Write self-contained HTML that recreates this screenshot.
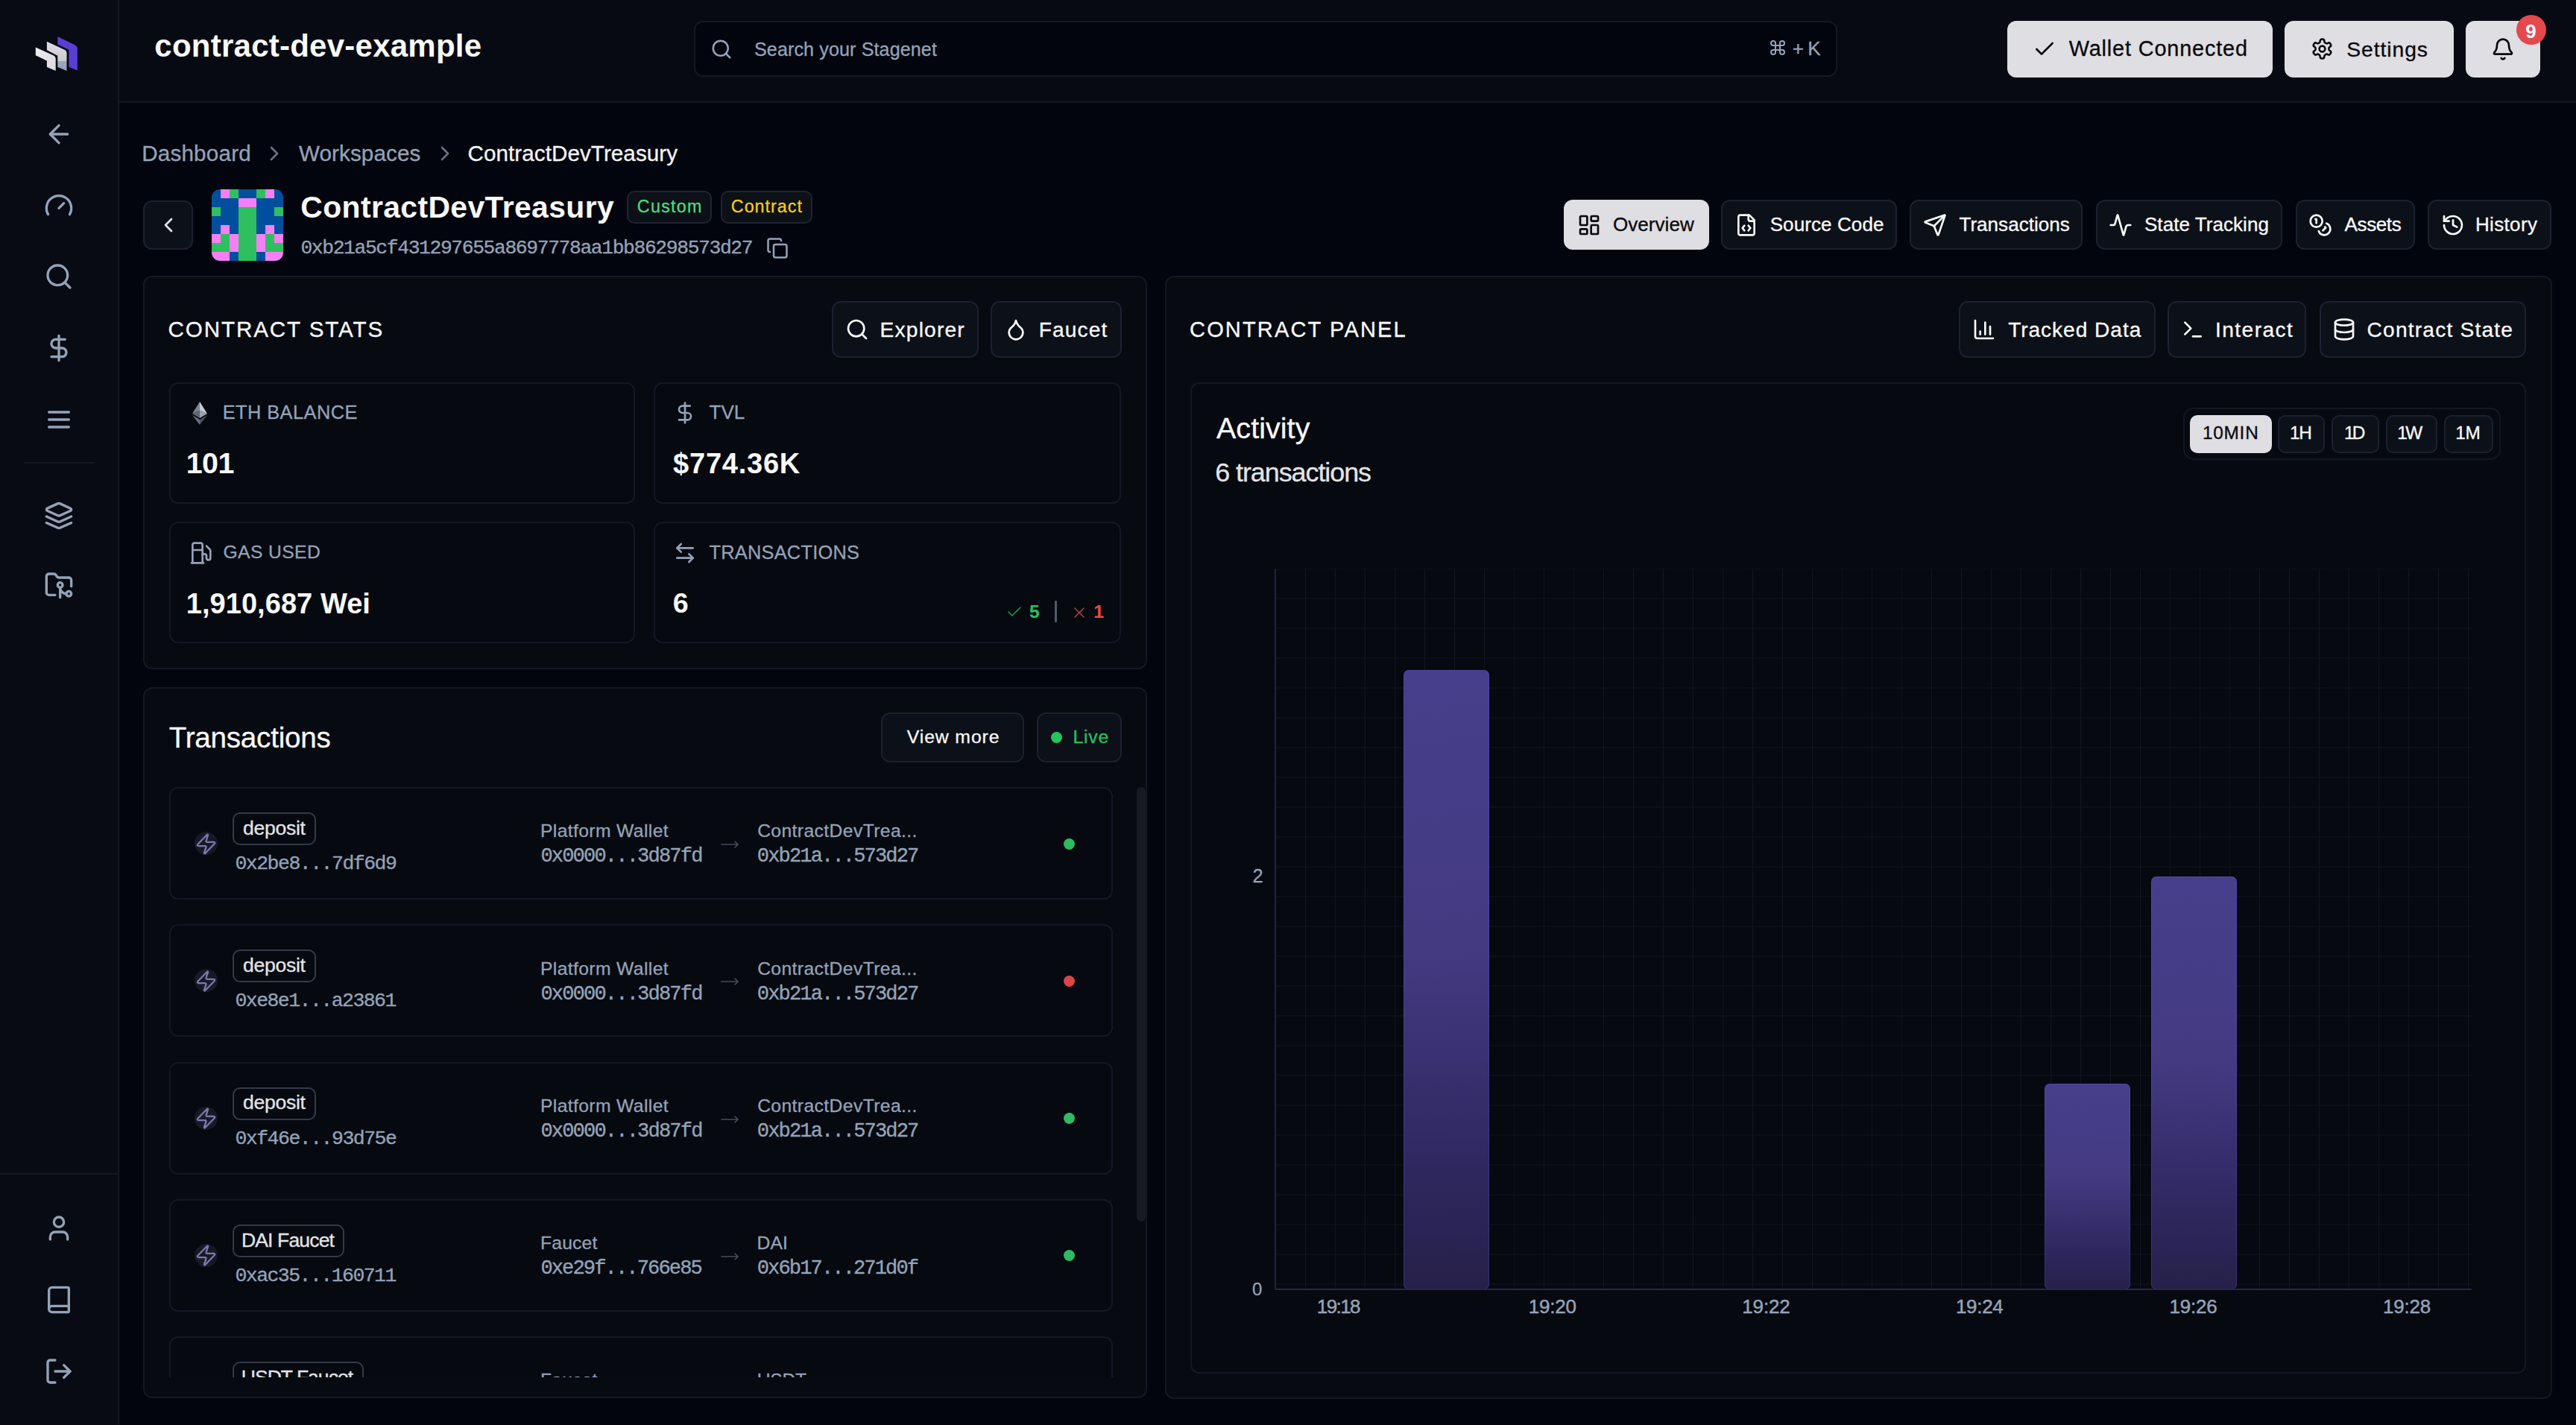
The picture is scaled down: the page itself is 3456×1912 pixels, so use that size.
<!DOCTYPE html>
<html><head><meta charset="utf-8"><style>
html,body{margin:0;padding:0;width:3456px;height:1912px;overflow:hidden;background:#03050e;font-family:"Liberation Sans",sans-serif}
@media (max-width:1800px){html{zoom:0.5}}
</style></head><body>
<div style="position:absolute;left:0px;top:0px;width:158px;height:1912px;background:#080b13;border-radius:0px;"></div>
<div style="position:absolute;left:158px;top:0px;width:2px;height:1912px;background:#131824;border-radius:0px;"></div>
<div style="position:absolute;left:32px;top:620px;width:94px;height:2px;background:#131824;border-radius:0px;"></div>
<div style="position:absolute;left:0px;top:1574px;width:158px;height:2px;background:#131824;border-radius:0px;"></div>
<svg style="position:absolute;left:0;top:0" width="160" height="136" viewBox="0 0 160 136">
<defs><linearGradient id="lg2" x1="0" y1="0" x2="0" y2="1"><stop offset="0" stop-color="#dedde3"/><stop offset="0.66" stop-color="#cbcbd2"/><stop offset="0.67" stop-color="#9ba8bc"/><stop offset="1" stop-color="#93a0b5"/></linearGradient>
<linearGradient id="lg1" x1="0" y1="0" x2="1" y2="1"><stop offset="0" stop-color="#eeeef1"/><stop offset="1" stop-color="#d9d9df"/></linearGradient></defs>
<path d="M77.3,49.1 L100.8,60.4 Q103.8,61.9 103.8,65.5 L103.8,94.5 L92.4,89.9 L92.4,66.7 L77.3,59.6 Z" fill="#5a3dd4"/>
<path d="M62.9,55.8 L86.5,66.7 Q89.5,68.2 89.5,71.4 L89.5,95 L77.3,89.9 L77.3,74.7 L62.9,67.2 Z" fill="url(#lg2)"/>
<path d="M47.8,63.4 L71.4,74.3 Q74.7,75.8 74.7,79 L74.7,95 L62.9,89.9 L62.9,81.5 L47.8,74.3 Z" fill="url(#lg1)"/>
</svg>
<svg style="position:absolute;left:58.50px;top:160.00px" width="40" height="40" viewBox="0 0 24 24" fill="none" stroke="#94a3b8" stroke-width="2" stroke-linecap="round" stroke-linejoin="round"><path d="m12 19-7-7 7-7"/><path d="M19 12H5"/></svg>
<svg style="position:absolute;left:58.50px;top:255.50px" width="40" height="40" viewBox="0 0 24 24" fill="none" stroke="#94a3b8" stroke-width="2" stroke-linecap="round" stroke-linejoin="round"><path d="m12 14 4-4"/><path d="M3.34 19a10 10 0 1 1 17.32 0"/></svg>
<svg style="position:absolute;left:58.50px;top:350.60px" width="40" height="40" viewBox="0 0 24 24" fill="none" stroke="#94a3b8" stroke-width="2" stroke-linecap="round" stroke-linejoin="round"><circle cx="11" cy="11" r="8"/><path d="m21 21-4.3-4.3"/></svg>
<svg style="position:absolute;left:58.50px;top:447.00px" width="40" height="40" viewBox="0 0 24 24" fill="none" stroke="#94a3b8" stroke-width="2" stroke-linecap="round" stroke-linejoin="round"><line x1="12" x2="12" y1="2" y2="22"/><path d="M17 5H9.5a3.5 3.5 0 0 0 0 7h5a3.5 3.5 0 0 1 0 7H6"/></svg>
<svg style="position:absolute;left:58.50px;top:543.00px" width="40" height="40" viewBox="0 0 24 24" fill="none" stroke="#94a3b8" stroke-width="2" stroke-linecap="round" stroke-linejoin="round"><line x1="4" x2="20" y1="12" y2="12"/><line x1="4" x2="20" y1="6" y2="6"/><line x1="4" x2="20" y1="18" y2="18"/></svg>
<svg style="position:absolute;left:58.50px;top:672.00px" width="40" height="40" viewBox="0 0 24 24" fill="none" stroke="#94a3b8" stroke-width="2" stroke-linecap="round" stroke-linejoin="round"><path d="M12.83 2.18a2 2 0 0 0-1.66 0L2.6 6.08a1 1 0 0 0 0 1.83l8.58 3.91a2 2 0 0 0 1.66 0l8.58-3.9a1 1 0 0 0 0-1.83Z"/><path d="m22 17.65-9.17 4.16a2 2 0 0 1-1.66 0L2 17.65"/><path d="m22 12.65-9.17 4.16a2 2 0 0 1-1.66 0L2 12.65"/></svg>
<svg style="position:absolute;left:58.50px;top:764.60px" width="40" height="40" viewBox="0 0 24 24" fill="none" stroke="#94a3b8" stroke-width="2" stroke-linecap="round" stroke-linejoin="round"><path d="M9 20H4a2 2 0 0 1-2-2V5a2 2 0 0 1 2-2h3.9a2 2 0 0 1 1.69.9l.81 1.2a2 2 0 0 0 1.67.9H20a2 2 0 0 1 2 2v5"/><circle cx="13" cy="12" r="2"/><path d="M18 19c-2.8 0-5-2.2-5-5v8"/><circle cx="20" cy="19" r="2"/></svg>
<svg style="position:absolute;left:58.50px;top:1627.60px" width="40" height="40" viewBox="0 0 24 24" fill="none" stroke="#94a3b8" stroke-width="2" stroke-linecap="round" stroke-linejoin="round"><path d="M19 21v-2a4 4 0 0 0-4-4H9a4 4 0 0 0-4 4v2"/><circle cx="12" cy="7" r="4"/></svg>
<svg style="position:absolute;left:58.50px;top:1724.00px" width="40" height="40" viewBox="0 0 24 24" fill="none" stroke="#94a3b8" stroke-width="2" stroke-linecap="round" stroke-linejoin="round"><path d="M4 19.5v-15A2.5 2.5 0 0 1 6.5 2H19a1 1 0 0 1 1 1v18a1 1 0 0 1-1 1H6.5a1 1 0 0 1 0-5H20"/></svg>
<svg style="position:absolute;left:58.50px;top:1820.00px" width="40" height="40" viewBox="0 0 24 24" fill="none" stroke="#94a3b8" stroke-width="2" stroke-linecap="round" stroke-linejoin="round"><path d="M9 21H5a2 2 0 0 1-2-2V5a2 2 0 0 1 2-2h4"/><polyline points="16 17 21 12 16 7"/><line x1="21" x2="9" y1="12" y2="12"/></svg>
<div style="position:absolute;left:160px;top:0px;width:3296px;height:136px;background:#070a12;border-radius:0px;"></div>
<div style="position:absolute;left:160px;top:136px;width:3296px;height:2px;background:#131824;border-radius:0px;"></div>
<div style="position:absolute;left:207.34px;top:40.73px;font-family:'Liberation Sans',sans-serif;font-weight:700;font-size:41.97px;line-height:41.97px;letter-spacing:0.258px;color:#fafafa;white-space:nowrap;">contract-dev-example</div>
<div style="position:absolute;left:931px;top:28px;width:1534px;height:75px;background:#03050e;border:2px solid #131824;box-sizing:border-box;border-radius:12px;"></div>
<svg style="position:absolute;left:953.00px;top:51.00px" width="30" height="30" viewBox="0 0 24 24" fill="none" stroke="#94a3b8" stroke-width="2" stroke-linecap="round" stroke-linejoin="round"><circle cx="11" cy="11" r="8"/><path d="m21 21-4.3-4.3"/></svg>
<div style="position:absolute;left:1012.00px;top:54.12px;font-family:'Liberation Sans',sans-serif;font-weight:400;font-size:25.07px;line-height:25.07px;letter-spacing:0.129px;color:#94a3b8;white-space:nowrap;-webkit-text-stroke:0.3px currentColor;">Search your Stagenet</div>
<svg style="position:absolute;left:2373px;top:52px" width="24" height="24" viewBox="0 0 24 24" fill="none" stroke="#94a3b8" stroke-width="2" stroke-linecap="round" stroke-linejoin="round"><path d="M15 6v12a3 3 0 1 0 3-3H6a3 3 0 1 0 3 3V6a3 3 0 1 0-3 3h12a3 3 0 1 0-3-3"/></svg>
<div style="position:absolute;left:2404.76px;top:52.18px;font-family:'Liberation Sans',sans-serif;font-weight:400;font-size:26.06px;line-height:26.06px;letter-spacing:-0.955px;color:#94a3b8;white-space:nowrap;-webkit-text-stroke:0.3px currentColor;">+ K</div>
<div style="position:absolute;left:2693px;top:28px;width:356px;height:76px;background:#dfdee3;border-radius:12px;"></div>
<svg style="position:absolute;left:2727.00px;top:49.50px" width="32" height="32" viewBox="0 0 24 24" fill="none" stroke="#09090b" stroke-width="2" stroke-linecap="round" stroke-linejoin="round"><path d="M20 6 9 17l-5-5"/></svg>
<div style="position:absolute;left:2775.70px;top:51.30px;font-family:'Liberation Sans',sans-serif;font-weight:400;font-size:28.87px;line-height:28.87px;letter-spacing:0.840px;color:#09090b;white-space:nowrap;-webkit-text-stroke:0.3px currentColor;">Wallet Connected</div>
<div style="position:absolute;left:3065px;top:28px;width:227px;height:76px;background:#dfdee3;border-radius:12px;"></div>
<svg style="position:absolute;left:3099.50px;top:50.20px" width="31" height="31" viewBox="0 0 24 24" fill="none" stroke="#09090b" stroke-width="2" stroke-linecap="round" stroke-linejoin="round"><path d="M12.22 2h-.44a2 2 0 0 0-2 2v.18a2 2 0 0 1-1 1.73l-.43.25a2 2 0 0 1-2 0l-.15-.08a2 2 0 0 0-2.73.73l-.22.38a2 2 0 0 0 .73 2.73l.15.1a2 2 0 0 1 1 1.72v.51a2 2 0 0 1-1 1.74l-.15.09a2 2 0 0 0-.73 2.73l.22.38a2 2 0 0 0 2.73.73l.15-.08a2 2 0 0 1 2 0l.43.25a2 2 0 0 1 1 1.73V20a2 2 0 0 0 2 2h.44a2 2 0 0 0 2-2v-.18a2 2 0 0 1 1-1.73l.43-.25a2 2 0 0 1 2 0l.15.08a2 2 0 0 0 2.73-.73l.22-.39a2 2 0 0 0-.73-2.73l-.15-.08a2 2 0 0 1-1-1.74v-.5a2 2 0 0 1 1-1.74l.15-.09a2 2 0 0 0 .73-2.73l-.22-.38a2 2 0 0 0-2.73-.73l-.15.08a2 2 0 0 1-2 0l-.43-.25a2 2 0 0 1-1-1.73V4a2 2 0 0 0-2-2z"/><circle cx="12" cy="12" r="3"/></svg>
<div style="position:absolute;left:3148.17px;top:51.58px;font-family:'Liberation Sans',sans-serif;font-weight:400;font-size:28.31px;line-height:28.31px;letter-spacing:0.941px;color:#09090b;white-space:nowrap;-webkit-text-stroke:0.3px currentColor;">Settings</div>
<div style="position:absolute;left:3308px;top:28px;width:100px;height:76px;background:#dfdee3;border-radius:12px;"></div>
<svg style="position:absolute;left:3342.00px;top:50.20px" width="32" height="32" viewBox="0 0 24 24" fill="none" stroke="#09090b" stroke-width="2" stroke-linecap="round" stroke-linejoin="round"><path d="M10.268 21a2 2 0 0 0 3.464 0"/><path d="M3.262 15.326A1 1 0 0 0 4 17h16a1 1 0 0 0 .74-1.673C19.41 13.956 18 12.499 18 8A6 6 0 0 0 6 8c0 4.499-1.411 5.956-2.738 7.326"/></svg>
<div style="position:absolute;left:3376px;top:19.5px;width:40px;height:40px;background:#e5484d;border-radius:20px;"></div>
<div style="position:absolute;left:3388.22px;top:29.50px;font-family:'Liberation Sans',sans-serif;font-weight:700;font-size:25.92px;line-height:25.92px;letter-spacing:0.000px;color:#ffffff;white-space:nowrap;">9</div>
<div style="position:absolute;left:190.13px;top:191.01px;font-family:'Liberation Sans',sans-serif;font-weight:400;font-size:29.58px;line-height:29.58px;letter-spacing:0.229px;color:#94a3b8;white-space:nowrap;-webkit-text-stroke:0.3px currentColor;">Dashboard</div>
<svg style="position:absolute;left:351.60px;top:190.00px" width="32" height="32" viewBox="0 0 24 24" fill="none" stroke="#6b7280" stroke-width="2" stroke-linecap="round" stroke-linejoin="round"><path d="m9 18 6-6-6-6"/></svg>
<div style="position:absolute;left:401.00px;top:191.01px;font-family:'Liberation Sans',sans-serif;font-weight:400;font-size:29.58px;line-height:29.58px;letter-spacing:0.122px;color:#94a3b8;white-space:nowrap;-webkit-text-stroke:0.3px currentColor;">Workspaces</div>
<svg style="position:absolute;left:580.60px;top:190.00px" width="32" height="32" viewBox="0 0 24 24" fill="none" stroke="#6b7280" stroke-width="2" stroke-linecap="round" stroke-linejoin="round"><path d="m9 18 6-6-6-6"/></svg>
<div style="position:absolute;left:627.52px;top:191.01px;font-family:'Liberation Sans',sans-serif;font-weight:400;font-size:29.58px;line-height:29.58px;letter-spacing:0.084px;color:#f4f4f5;white-space:nowrap;-webkit-text-stroke:0.3px currentColor;">ContractDevTreasury</div>
<div style="position:absolute;left:192px;top:269px;width:67px;height:66px;background:#0c1018;border:2px solid #1c2130;box-sizing:border-box;border-radius:12px;"></div>
<svg style="position:absolute;left:210.00px;top:286.00px" width="32" height="32" viewBox="0 0 24 24" fill="none" stroke="#e4e4e7" stroke-width="2" stroke-linecap="round" stroke-linejoin="round"><path d="m15 18-6-6 6-6"/></svg>
<svg style="position:absolute;left:284px;top:254px;border-radius:11px" width="96" height="96" viewBox="0 0 96 96"><rect x="0" y="0" width="12" height="12" fill="#004f9e"/><rect x="12" y="0" width="12" height="12" fill="#f77ff5"/><rect x="24" y="0" width="12" height="12" fill="#30bf60"/><rect x="36" y="0" width="12" height="12" fill="#004f9e"/><rect x="48" y="0" width="12" height="12" fill="#004f9e"/><rect x="60" y="0" width="12" height="12" fill="#30bf60"/><rect x="72" y="0" width="12" height="12" fill="#f77ff5"/><rect x="84" y="0" width="12" height="12" fill="#004f9e"/><rect x="0" y="12" width="12" height="12" fill="#004f9e"/><rect x="12" y="12" width="12" height="12" fill="#004f9e"/><rect x="24" y="12" width="12" height="12" fill="#004f9e"/><rect x="36" y="12" width="12" height="12" fill="#f77ff5"/><rect x="48" y="12" width="12" height="12" fill="#f77ff5"/><rect x="60" y="12" width="12" height="12" fill="#004f9e"/><rect x="72" y="12" width="12" height="12" fill="#004f9e"/><rect x="84" y="12" width="12" height="12" fill="#004f9e"/><rect x="0" y="24" width="12" height="12" fill="#30bf60"/><rect x="12" y="24" width="12" height="12" fill="#004f9e"/><rect x="24" y="24" width="12" height="12" fill="#004f9e"/><rect x="36" y="24" width="12" height="12" fill="#30bf60"/><rect x="48" y="24" width="12" height="12" fill="#30bf60"/><rect x="60" y="24" width="12" height="12" fill="#004f9e"/><rect x="72" y="24" width="12" height="12" fill="#004f9e"/><rect x="84" y="24" width="12" height="12" fill="#30bf60"/><rect x="0" y="36" width="12" height="12" fill="#004f9e"/><rect x="12" y="36" width="12" height="12" fill="#004f9e"/><rect x="24" y="36" width="12" height="12" fill="#004f9e"/><rect x="36" y="36" width="12" height="12" fill="#30bf60"/><rect x="48" y="36" width="12" height="12" fill="#30bf60"/><rect x="60" y="36" width="12" height="12" fill="#004f9e"/><rect x="72" y="36" width="12" height="12" fill="#004f9e"/><rect x="84" y="36" width="12" height="12" fill="#004f9e"/><rect x="0" y="48" width="12" height="12" fill="#004f9e"/><rect x="12" y="48" width="12" height="12" fill="#f77ff5"/><rect x="24" y="48" width="12" height="12" fill="#004f9e"/><rect x="36" y="48" width="12" height="12" fill="#30bf60"/><rect x="48" y="48" width="12" height="12" fill="#30bf60"/><rect x="60" y="48" width="12" height="12" fill="#004f9e"/><rect x="72" y="48" width="12" height="12" fill="#f77ff5"/><rect x="84" y="48" width="12" height="12" fill="#004f9e"/><rect x="0" y="60" width="12" height="12" fill="#f77ff5"/><rect x="12" y="60" width="12" height="12" fill="#30bf60"/><rect x="24" y="60" width="12" height="12" fill="#f77ff5"/><rect x="36" y="60" width="12" height="12" fill="#30bf60"/><rect x="48" y="60" width="12" height="12" fill="#30bf60"/><rect x="60" y="60" width="12" height="12" fill="#f77ff5"/><rect x="72" y="60" width="12" height="12" fill="#30bf60"/><rect x="84" y="60" width="12" height="12" fill="#f77ff5"/><rect x="0" y="72" width="12" height="12" fill="#30bf60"/><rect x="12" y="72" width="12" height="12" fill="#30bf60"/><rect x="24" y="72" width="12" height="12" fill="#f77ff5"/><rect x="36" y="72" width="12" height="12" fill="#30bf60"/><rect x="48" y="72" width="12" height="12" fill="#30bf60"/><rect x="60" y="72" width="12" height="12" fill="#f77ff5"/><rect x="72" y="72" width="12" height="12" fill="#30bf60"/><rect x="84" y="72" width="12" height="12" fill="#30bf60"/><rect x="0" y="84" width="12" height="12" fill="#f77ff5"/><rect x="12" y="84" width="12" height="12" fill="#f77ff5"/><rect x="24" y="84" width="12" height="12" fill="#004f9e"/><rect x="36" y="84" width="12" height="12" fill="#30bf60"/><rect x="48" y="84" width="12" height="12" fill="#30bf60"/><rect x="60" y="84" width="12" height="12" fill="#004f9e"/><rect x="72" y="84" width="12" height="12" fill="#f77ff5"/><rect x="84" y="84" width="12" height="12" fill="#f77ff5"/></svg>
<div style="position:absolute;left:403.37px;top:257.89px;font-family:'Liberation Sans',sans-serif;font-weight:700;font-size:40.85px;line-height:40.85px;letter-spacing:0.407px;color:#fafafa;white-space:nowrap;">ContractDevTreasury</div>
<div style="position:absolute;left:841px;top:256px;width:114px;height:44px;background:#0c1017;border:2px solid #1f2433;box-sizing:border-box;border-radius:10px;"></div>
<div style="position:absolute;left:854.84px;top:265.86px;font-family:'Liberation Sans',sans-serif;font-weight:400;font-size:23.24px;line-height:23.24px;letter-spacing:1.312px;color:#4ade80;white-space:nowrap;-webkit-text-stroke:0.3px currentColor;">Custom</div>
<div style="position:absolute;left:967px;top:256px;width:123px;height:44px;background:#0c1017;border:2px solid #1f2433;box-sizing:border-box;border-radius:10px;"></div>
<div style="position:absolute;left:980.84px;top:265.86px;font-family:'Liberation Sans',sans-serif;font-weight:400;font-size:23.24px;line-height:23.24px;letter-spacing:1.040px;color:#facc15;white-space:nowrap;-webkit-text-stroke:0.3px currentColor;">Contract</div>
<div style="position:absolute;left:403.42px;top:320.46px;font-family:'Liberation Mono',sans-serif;font-weight:400;font-size:26.32px;line-height:26.32px;letter-spacing:-1.367px;color:#94a3b8;white-space:nowrap;-webkit-text-stroke:0.35px currentColor;">0xb21a5cf431297655a8697778aa1bb86298573d27</div>
<svg style="position:absolute;left:1028.00px;top:318.00px" width="30" height="30" viewBox="0 0 24 24" fill="none" stroke="#94a3b8" stroke-width="2" stroke-linecap="round" stroke-linejoin="round"><rect width="14" height="14" x="8" y="8" rx="2" ry="2"/><path d="M4 16c-1.1 0-2-.9-2-2V4c0-1.1.9-2 2-2h10c1.1 0 2 .9 2 2"/></svg>
<div style="position:absolute;left:2098px;top:268px;width:195px;height:67px;background:#dfdee3;border-radius:12px;"></div>
<svg style="position:absolute;left:2115.50px;top:285.50px" width="32" height="32" viewBox="0 0 24 24" fill="none" stroke="#09090b" stroke-width="2" stroke-linecap="round" stroke-linejoin="round"><rect width="7" height="9" x="3" y="3" rx="1"/><rect width="7" height="5" x="14" y="3" rx="1"/><rect width="7" height="9" x="14" y="12" rx="1"/><rect width="7" height="5" x="3" y="16" rx="1"/></svg>
<div style="position:absolute;left:2163.96px;top:287.98px;font-family:'Liberation Sans',sans-serif;font-weight:400;font-size:26.06px;line-height:26.06px;letter-spacing:0.036px;color:#09090b;white-space:nowrap;-webkit-text-stroke:0.3px currentColor;">Overview</div>
<div style="position:absolute;left:2309px;top:268px;width:236px;height:67px;background:#0c1018;border:2px solid #1c2130;box-sizing:border-box;border-radius:12px;"></div>
<svg style="position:absolute;left:2326.50px;top:285.50px" width="32" height="32" viewBox="0 0 24 24" fill="none" stroke="#fafafa" stroke-width="2" stroke-linecap="round" stroke-linejoin="round"><path d="M10 12.5 8 15l2 2.5"/><path d="m14 12.5 2 2.5-2 2.5"/><path d="M14 2v4a2 2 0 0 0 2 2h4"/><path d="M15 2H6a2 2 0 0 0-2 2v16a2 2 0 0 0 2 2h12a2 2 0 0 0 2-2V7z"/></svg>
<div style="position:absolute;left:2374.66px;top:287.98px;font-family:'Liberation Sans',sans-serif;font-weight:400;font-size:26.06px;line-height:26.06px;letter-spacing:0.080px;color:#fafafa;white-space:nowrap;-webkit-text-stroke:0.3px currentColor;">Source Code</div>
<div style="position:absolute;left:2562px;top:268px;width:232px;height:67px;background:#0c1018;border:2px solid #1c2130;box-sizing:border-box;border-radius:12px;"></div>
<svg style="position:absolute;left:2579.50px;top:285.50px" width="32" height="32" viewBox="0 0 24 24" fill="none" stroke="#fafafa" stroke-width="2" stroke-linecap="round" stroke-linejoin="round"><path d="M14.536 21.686a.5.5 0 0 0 .937-.024l6.5-19a.496.496 0 0 0-.635-.635l-19 6.5a.5.5 0 0 0-.024.937l7.93 3.18a2 2 0 0 1 1.112 1.11z"/><path d="m21.854 2.147-10.94 10.939"/></svg>
<div style="position:absolute;left:2628.48px;top:287.98px;font-family:'Liberation Sans',sans-serif;font-weight:400;font-size:26.06px;line-height:26.06px;letter-spacing:0.010px;color:#fafafa;white-space:nowrap;-webkit-text-stroke:0.3px currentColor;">Transactions</div>
<div style="position:absolute;left:2811.5px;top:268px;width:250.5px;height:67px;background:#0c1018;border:2px solid #1c2130;box-sizing:border-box;border-radius:12px;"></div>
<svg style="position:absolute;left:2829.00px;top:285.50px" width="32" height="32" viewBox="0 0 24 24" fill="none" stroke="#fafafa" stroke-width="2" stroke-linecap="round" stroke-linejoin="round"><path d="M22 12h-2.48a2 2 0 0 0-1.93 1.46l-2.35 8.36a.25.25 0 0 1-.48 0L9.24 2.18a.25.25 0 0 0-.48 0l-2.35 8.36A2 2 0 0 1 4.49 12H2"/></svg>
<div style="position:absolute;left:2876.96px;top:287.98px;font-family:'Liberation Sans',sans-serif;font-weight:400;font-size:26.06px;line-height:26.06px;letter-spacing:0.037px;color:#fafafa;white-space:nowrap;-webkit-text-stroke:0.3px currentColor;">State Tracking</div>
<div style="position:absolute;left:3079.6px;top:268px;width:160.4000000000001px;height:67px;background:#0c1018;border:2px solid #1c2130;box-sizing:border-box;border-radius:12px;"></div>
<svg style="position:absolute;left:3097.10px;top:285.50px" width="32" height="32" viewBox="0 0 24 24" fill="none" stroke="#fafafa" stroke-width="2" stroke-linecap="round" stroke-linejoin="round"><circle cx="8" cy="8" r="6"/><path d="M18.09 10.37A6 6 0 1 1 10.34 18"/><path d="M7 6h1v4"/><path d="m16.71 13.88.7.71-2.82 2.82"/></svg>
<div style="position:absolute;left:3145.50px;top:287.98px;font-family:'Liberation Sans',sans-serif;font-weight:400;font-size:26.06px;line-height:26.06px;letter-spacing:-0.383px;color:#fafafa;white-space:nowrap;-webkit-text-stroke:0.3px currentColor;">Assets</div>
<div style="position:absolute;left:3257.4px;top:268px;width:166.0px;height:67px;background:#0c1018;border:2px solid #1c2130;box-sizing:border-box;border-radius:12px;"></div>
<svg style="position:absolute;left:3274.90px;top:285.50px" width="32" height="32" viewBox="0 0 24 24" fill="none" stroke="#fafafa" stroke-width="2" stroke-linecap="round" stroke-linejoin="round"><path d="M3 12a9 9 0 1 0 9-9 9.75 9.75 0 0 0-6.74 2.74L3 8"/><path d="M3 3v5h5"/><path d="M12 7v5l4 2"/></svg>
<div style="position:absolute;left:3320.92px;top:287.98px;font-family:'Liberation Sans',sans-serif;font-weight:400;font-size:26.06px;line-height:26.06px;letter-spacing:0.336px;color:#fafafa;white-space:nowrap;-webkit-text-stroke:0.3px currentColor;">History</div>
<div style="position:absolute;left:192px;top:370px;width:1347px;height:528px;background:#070a11;border:2px solid #131824;box-sizing:border-box;border-radius:12px;"></div>
<div style="position:absolute;left:225.52px;top:427.01px;font-family:'Liberation Sans',sans-serif;font-weight:400;font-size:29.58px;line-height:29.58px;letter-spacing:1.902px;color:#fafafa;white-space:nowrap;-webkit-text-stroke:0.3px currentColor;">CONTRACT STATS</div>
<div style="position:absolute;left:1116px;top:404px;width:197px;height:76px;background:#0c1018;border:2px solid #1c2130;box-sizing:border-box;border-radius:12px;"></div>
<svg style="position:absolute;left:1134.00px;top:426.00px" width="32" height="32" viewBox="0 0 24 24" fill="none" stroke="#fafafa" stroke-width="2" stroke-linecap="round" stroke-linejoin="round"><circle cx="11" cy="11" r="8"/><path d="m21 21-4.3-4.3"/></svg>
<div style="position:absolute;left:1180.55px;top:428.20px;font-family:'Liberation Sans',sans-serif;font-weight:400;font-size:28.17px;line-height:28.17px;letter-spacing:1.190px;color:#fafafa;white-space:nowrap;-webkit-text-stroke:0.3px currentColor;">Explorer</div>
<div style="position:absolute;left:1329px;top:404px;width:176px;height:76px;background:#0c1018;border:2px solid #1c2130;box-sizing:border-box;border-radius:12px;"></div>
<svg style="position:absolute;left:1346.80px;top:426.00px" width="32" height="32" viewBox="0 0 24 24" fill="none" stroke="#fafafa" stroke-width="2" stroke-linecap="round" stroke-linejoin="round"><path d="M12 22a7 7 0 0 0 7-7c0-2-1-3.9-3-5.5s-3.5-4-4-6.5c-.5 2.5-2 4.9-4 6.5C6 11.1 5 13 5 15a7 7 0 0 0 7 7z"/></svg>
<div style="position:absolute;left:1393.75px;top:428.20px;font-family:'Liberation Sans',sans-serif;font-weight:400;font-size:28.17px;line-height:28.17px;letter-spacing:1.115px;color:#fafafa;white-space:nowrap;-webkit-text-stroke:0.3px currentColor;">Faucet</div>
<div style="position:absolute;left:227px;top:513px;width:625px;height:163px;background:#060910;border:2px solid #131824;box-sizing:border-box;border-radius:12px;"></div>
<div style="position:absolute;left:877px;top:513px;width:627px;height:163px;background:#060910;border:2px solid #131824;box-sizing:border-box;border-radius:12px;"></div>
<div style="position:absolute;left:227px;top:700px;width:625px;height:163px;background:#060910;border:2px solid #131824;box-sizing:border-box;border-radius:12px;"></div>
<div style="position:absolute;left:877px;top:700px;width:627px;height:163px;background:#060910;border:2px solid #131824;box-sizing:border-box;border-radius:12px;"></div>
<svg style="position:absolute;left:258px;top:539px" width="20" height="31" viewBox="0 0 20 31">
<polygon points="10,0 0,16 10,12" fill="#7d8594"/><polygon points="10,0 20,16 10,12" fill="#c4c9d2"/>
<polygon points="0,16 10,22 10,12" fill="#5f6675"/><polygon points="20,16 10,22 10,12" fill="#9aa1ae"/>
<polygon points="0,18 10,31 10,24" fill="#6a7180"/><polygon points="20,18 10,31 10,24" fill="#4b5160"/></svg>
<div style="position:absolute;left:298.67px;top:540.58px;font-family:'Liberation Sans',sans-serif;font-weight:400;font-size:25.35px;line-height:25.35px;letter-spacing:0.466px;color:#94a3b8;white-space:nowrap;-webkit-text-stroke:0.3px currentColor;">ETH BALANCE</div>
<div style="position:absolute;left:249.63px;top:601.68px;font-family:'Liberation Sans',sans-serif;font-weight:700;font-size:39.44px;line-height:39.44px;letter-spacing:-0.500px;color:#fafafa;white-space:nowrap;">101</div>
<svg style="position:absolute;left:902.80px;top:538.00px" width="32" height="32" viewBox="0 0 24 24" fill="none" stroke="#94a3b8" stroke-width="2" stroke-linecap="round" stroke-linejoin="round"><line x1="12" x2="12" y1="2" y2="22"/><path d="M17 5H9.5a3.5 3.5 0 0 0 0 7h5a3.5 3.5 0 0 1 0 7H6"/></svg>
<div style="position:absolute;left:951.48px;top:540.50px;font-family:'Liberation Sans',sans-serif;font-weight:400;font-size:25.92px;line-height:25.92px;letter-spacing:0.134px;color:#94a3b8;white-space:nowrap;-webkit-text-stroke:0.3px currentColor;">TVL</div>
<div style="position:absolute;left:903.12px;top:602.87px;font-family:'Liberation Sans',sans-serif;font-weight:700;font-size:38.03px;line-height:38.03px;letter-spacing:0.763px;color:#fafafa;white-space:nowrap;">$774.36K</div>
<svg style="position:absolute;left:253.00px;top:725.70px" width="32" height="32" viewBox="0 0 24 24" fill="none" stroke="#94a3b8" stroke-width="2" stroke-linecap="round" stroke-linejoin="round"><line x1="3" x2="15" y1="22" y2="22"/><line x1="4" x2="14" y1="9" y2="9"/><path d="M14 22V4a2 2 0 0 0-2-2H6a2 2 0 0 0-2 2v18"/><path d="M14 13h2a2 2 0 0 1 2 2v2a2 2 0 0 0 2 2a2 2 0 0 0 2-2V9.83a2 2 0 0 0-.59-1.42L18 5"/></svg>
<div style="position:absolute;left:299.47px;top:729.17px;font-family:'Liberation Sans',sans-serif;font-weight:400;font-size:24.65px;line-height:24.65px;letter-spacing:0.413px;color:#94a3b8;white-space:nowrap;-webkit-text-stroke:0.3px currentColor;">GAS USED</div>
<div style="position:absolute;left:249.72px;top:790.87px;font-family:'Liberation Sans',sans-serif;font-weight:700;font-size:38.03px;line-height:38.03px;letter-spacing:0.050px;color:#fafafa;white-space:nowrap;">1,910,687 Wei</div>
<svg style="position:absolute;left:902.80px;top:725.80px" width="32" height="32" viewBox="0 0 24 24" fill="none" stroke="#94a3b8" stroke-width="2" stroke-linecap="round" stroke-linejoin="round"><path d="M8 3 4 7l4 4"/><path d="M4 7h16"/><path d="m16 21 4-4-4-4"/><path d="M20 17H4"/></svg>
<div style="position:absolute;left:951.49px;top:728.58px;font-family:'Liberation Sans',sans-serif;font-weight:400;font-size:25.35px;line-height:25.35px;letter-spacing:0.258px;color:#94a3b8;white-space:nowrap;-webkit-text-stroke:0.3px currentColor;">TRANSACTIONS</div>
<div style="position:absolute;left:902.87px;top:790.92px;font-family:'Liberation Sans',sans-serif;font-weight:700;font-size:37.61px;line-height:37.61px;letter-spacing:0.000px;color:#fafafa;white-space:nowrap;">6</div>
<svg style="position:absolute;left:1348.80px;top:809.30px" width="24" height="24" viewBox="0 0 24 24" fill="none" stroke="#16a34a" stroke-width="1.5" stroke-linecap="round" stroke-linejoin="round"><path d="M20 6 9 17l-5-5"/></svg>
<div style="position:absolute;left:1380.96px;top:808.67px;font-family:'Liberation Sans',sans-serif;font-weight:700;font-size:24.65px;line-height:24.65px;letter-spacing:0.000px;color:#22c55e;white-space:nowrap;">5</div>
<div style="position:absolute;left:1414.5px;top:806px;width:3.5px;height:29px;background:#525a68;border-radius:1px;"></div>
<svg style="position:absolute;left:1435.90px;top:810.00px" width="24" height="24" viewBox="0 0 24 24" fill="none" stroke="#b4433f" stroke-width="1.5" stroke-linecap="round" stroke-linejoin="round"><path d="M18 6 6 18"/><path d="m6 6 12 12"/></svg>
<div style="position:absolute;left:1467.22px;top:808.67px;font-family:'Liberation Sans',sans-serif;font-weight:700;font-size:24.65px;line-height:24.65px;letter-spacing:0.000px;color:#ef4444;white-space:nowrap;">1</div>
<div style="position:absolute;left:192px;top:922px;width:1347px;height:954px;background:#070a11;border:2px solid #131824;box-sizing:border-box;border-radius:12px;"></div>
<div style="position:absolute;left:226.73px;top:970.79px;font-family:'Liberation Sans',sans-serif;font-weight:400;font-size:38.59px;line-height:38.59px;letter-spacing:-0.215px;color:#fafafa;white-space:nowrap;-webkit-text-stroke:0.3px currentColor;">Transactions</div>
<div style="position:absolute;left:1182px;top:956px;width:192px;height:67px;background:#0c1018;border:2px solid #1c2130;box-sizing:border-box;border-radius:12px;"></div>
<div style="position:absolute;left:1216.80px;top:976.85px;font-family:'Liberation Sans',sans-serif;font-weight:400;font-size:24.79px;line-height:24.79px;letter-spacing:0.881px;color:#fafafa;white-space:nowrap;-webkit-text-stroke:0.3px currentColor;">View more</div>
<div style="position:absolute;left:1391px;top:956px;width:114px;height:67px;background:#0c1018;border:2px solid #1c2130;box-sizing:border-box;border-radius:12px;"></div>
<div style="position:absolute;left:1409.5px;top:982.2px;width:15px;height:15px;background:#22c55e;border-radius:8px;"></div>
<div style="position:absolute;left:1439.52px;top:976.85px;font-family:'Liberation Sans',sans-serif;font-weight:400;font-size:24.79px;line-height:24.79px;letter-spacing:0.768px;color:#22c55e;white-space:nowrap;-webkit-text-stroke:0.3px currentColor;">Live</div>
<div style="position:absolute;left:192px;top:1040px;width:1347px;height:807.7px;overflow:hidden">
<div style="position:absolute;left:35px;top:16.0px;width:1266px;height:151px;background:#060910;border:2px solid #131824;box-sizing:border-box;border-radius:12px;"></div>
<div style="position:absolute;left:68.5px;top:76.0px;width:31px;height:31px;background:#171a26;border-radius:16px;"></div>
<svg style="position:absolute;left:68.50px;top:76.50px" width="31" height="31" viewBox="0 0 24 24" fill="none" stroke="#7e78ad" stroke-width="1.8" stroke-linecap="round" stroke-linejoin="round"><path d="M4 14a1 1 0 0 1-.78-1.63l9.9-10.2a.5.5 0 0 1 .86.46l-1.92 6.02A1 1 0 0 0 13 10h7a1 1 0 0 1 .78 1.63l-9.9 10.2a.5.5 0 0 1-.86-.46l1.92-6.02A1 1 0 0 0 11 14z"/></svg>
<div style="position:absolute;left:120px;top:50.0px;width:111.89999999999998px;height:44px;background:transparent;border:2px solid #343a47;box-sizing:border-box;border-radius:10px;"></div>
<div style="position:absolute;left:133.94px;top:57.59px;font-family:'Liberation Sans',sans-serif;font-weight:400;font-size:26.52px;line-height:26.52px;letter-spacing:-0.253px;color:#e4e4e7;white-space:nowrap;-webkit-text-stroke:0.3px currentColor;">deposit</div>
<div style="position:absolute;left:123.41px;top:106.05px;font-family:'Liberation Mono',sans-serif;font-weight:400;font-size:26.47px;line-height:26.47px;letter-spacing:-1.485px;color:#94a3b8;white-space:nowrap;-webkit-text-stroke:0.35px currentColor;">0x2be8...7df6d9</div>
<div style="position:absolute;left:533.03px;top:63.17px;font-family:'Liberation Sans',sans-serif;font-weight:400;font-size:24.65px;line-height:24.65px;letter-spacing:0.388px;color:#94a3b8;white-space:nowrap;-webkit-text-stroke:0.3px currentColor;">Platform Wallet</div>
<div style="position:absolute;left:533.38px;top:95.30px;font-family:'Liberation Mono',sans-serif;font-weight:400;font-size:27.06px;line-height:27.06px;letter-spacing:-1.820px;color:#94a3b8;white-space:nowrap;-webkit-text-stroke:0.35px currentColor;">0x0000...3d87fd</div>
<svg style="position:absolute;left:774px;top:85.0px" width="28" height="16" viewBox="0 0 28 16" fill="none" stroke="#464b5a" stroke-width="1.6" stroke-linecap="round"><path d="M2 8h22M20 4l4 4-4 4"/></svg>
<div style="position:absolute;left:824.17px;top:63.17px;font-family:'Liberation Sans',sans-serif;font-weight:400;font-size:24.65px;line-height:24.65px;letter-spacing:0.412px;color:#94a3b8;white-space:nowrap;-webkit-text-stroke:0.3px currentColor;">ContractDevTrea...</div>
<div style="position:absolute;left:823.78px;top:95.30px;font-family:'Liberation Mono',sans-serif;font-weight:400;font-size:27.06px;line-height:27.06px;letter-spacing:-1.853px;color:#94a3b8;white-space:nowrap;-webkit-text-stroke:0.35px currentColor;">0xb21a...573d27</div>
<div style="position:absolute;left:1235px;top:84.5px;width:15px;height:15px;background:#2dbb63;border-radius:8px;"></div>
<div style="position:absolute;left:35px;top:200.32999999999993px;width:1266px;height:151px;background:#060910;border:2px solid #131824;box-sizing:border-box;border-radius:12px;"></div>
<div style="position:absolute;left:68.5px;top:260.3299999999999px;width:31px;height:31px;background:#171a26;border-radius:16px;"></div>
<svg style="position:absolute;left:68.50px;top:260.83px" width="31" height="31" viewBox="0 0 24 24" fill="none" stroke="#7e78ad" stroke-width="1.8" stroke-linecap="round" stroke-linejoin="round"><path d="M4 14a1 1 0 0 1-.78-1.63l9.9-10.2a.5.5 0 0 1 .86.46l-1.92 6.02A1 1 0 0 0 13 10h7a1 1 0 0 1 .78 1.63l-9.9 10.2a.5.5 0 0 1-.86-.46l1.92-6.02A1 1 0 0 0 11 14z"/></svg>
<div style="position:absolute;left:120px;top:234.32999999999993px;width:111.89999999999998px;height:44px;background:transparent;border:2px solid #343a47;box-sizing:border-box;border-radius:10px;"></div>
<div style="position:absolute;left:133.94px;top:241.92px;font-family:'Liberation Sans',sans-serif;font-weight:400;font-size:26.52px;line-height:26.52px;letter-spacing:-0.253px;color:#e4e4e7;white-space:nowrap;-webkit-text-stroke:0.3px currentColor;">deposit</div>
<div style="position:absolute;left:123.41px;top:290.38px;font-family:'Liberation Mono',sans-serif;font-weight:400;font-size:26.47px;line-height:26.47px;letter-spacing:-1.523px;color:#94a3b8;white-space:nowrap;-webkit-text-stroke:0.35px currentColor;">0xe8e1...a23861</div>
<div style="position:absolute;left:533.03px;top:247.50px;font-family:'Liberation Sans',sans-serif;font-weight:400;font-size:24.65px;line-height:24.65px;letter-spacing:0.388px;color:#94a3b8;white-space:nowrap;-webkit-text-stroke:0.3px currentColor;">Platform Wallet</div>
<div style="position:absolute;left:533.38px;top:279.63px;font-family:'Liberation Mono',sans-serif;font-weight:400;font-size:27.06px;line-height:27.06px;letter-spacing:-1.820px;color:#94a3b8;white-space:nowrap;-webkit-text-stroke:0.35px currentColor;">0x0000...3d87fd</div>
<svg style="position:absolute;left:774px;top:269.3299999999999px" width="28" height="16" viewBox="0 0 28 16" fill="none" stroke="#464b5a" stroke-width="1.6" stroke-linecap="round"><path d="M2 8h22M20 4l4 4-4 4"/></svg>
<div style="position:absolute;left:824.17px;top:247.50px;font-family:'Liberation Sans',sans-serif;font-weight:400;font-size:24.65px;line-height:24.65px;letter-spacing:0.412px;color:#94a3b8;white-space:nowrap;-webkit-text-stroke:0.3px currentColor;">ContractDevTrea...</div>
<div style="position:absolute;left:823.78px;top:279.63px;font-family:'Liberation Mono',sans-serif;font-weight:400;font-size:27.06px;line-height:27.06px;letter-spacing:-1.853px;color:#94a3b8;white-space:nowrap;-webkit-text-stroke:0.35px currentColor;">0xb21a...573d27</div>
<div style="position:absolute;left:1235px;top:268.8299999999999px;width:15px;height:15px;background:#dc4545;border-radius:8px;"></div>
<div style="position:absolute;left:35px;top:384.6600000000001px;width:1266px;height:151px;background:#060910;border:2px solid #131824;box-sizing:border-box;border-radius:12px;"></div>
<div style="position:absolute;left:68.5px;top:444.6600000000001px;width:31px;height:31px;background:#171a26;border-radius:16px;"></div>
<svg style="position:absolute;left:68.50px;top:445.16px" width="31" height="31" viewBox="0 0 24 24" fill="none" stroke="#7e78ad" stroke-width="1.8" stroke-linecap="round" stroke-linejoin="round"><path d="M4 14a1 1 0 0 1-.78-1.63l9.9-10.2a.5.5 0 0 1 .86.46l-1.92 6.02A1 1 0 0 0 13 10h7a1 1 0 0 1 .78 1.63l-9.9 10.2a.5.5 0 0 1-.86-.46l1.92-6.02A1 1 0 0 0 11 14z"/></svg>
<div style="position:absolute;left:120px;top:418.6600000000001px;width:111.89999999999998px;height:44px;background:transparent;border:2px solid #343a47;box-sizing:border-box;border-radius:10px;"></div>
<div style="position:absolute;left:133.94px;top:426.25px;font-family:'Liberation Sans',sans-serif;font-weight:400;font-size:26.52px;line-height:26.52px;letter-spacing:-0.253px;color:#e4e4e7;white-space:nowrap;-webkit-text-stroke:0.3px currentColor;">deposit</div>
<div style="position:absolute;left:123.41px;top:474.71px;font-family:'Liberation Mono',sans-serif;font-weight:400;font-size:26.47px;line-height:26.47px;letter-spacing:-1.485px;color:#94a3b8;white-space:nowrap;-webkit-text-stroke:0.35px currentColor;">0xf46e...93d75e</div>
<div style="position:absolute;left:533.03px;top:431.83px;font-family:'Liberation Sans',sans-serif;font-weight:400;font-size:24.65px;line-height:24.65px;letter-spacing:0.388px;color:#94a3b8;white-space:nowrap;-webkit-text-stroke:0.3px currentColor;">Platform Wallet</div>
<div style="position:absolute;left:533.38px;top:463.96px;font-family:'Liberation Mono',sans-serif;font-weight:400;font-size:27.06px;line-height:27.06px;letter-spacing:-1.820px;color:#94a3b8;white-space:nowrap;-webkit-text-stroke:0.35px currentColor;">0x0000...3d87fd</div>
<svg style="position:absolute;left:774px;top:453.6600000000001px" width="28" height="16" viewBox="0 0 28 16" fill="none" stroke="#464b5a" stroke-width="1.6" stroke-linecap="round"><path d="M2 8h22M20 4l4 4-4 4"/></svg>
<div style="position:absolute;left:824.17px;top:431.83px;font-family:'Liberation Sans',sans-serif;font-weight:400;font-size:24.65px;line-height:24.65px;letter-spacing:0.412px;color:#94a3b8;white-space:nowrap;-webkit-text-stroke:0.3px currentColor;">ContractDevTrea...</div>
<div style="position:absolute;left:823.78px;top:463.96px;font-family:'Liberation Mono',sans-serif;font-weight:400;font-size:27.06px;line-height:27.06px;letter-spacing:-1.853px;color:#94a3b8;white-space:nowrap;-webkit-text-stroke:0.35px currentColor;">0xb21a...573d27</div>
<div style="position:absolute;left:1235px;top:453.1600000000001px;width:15px;height:15px;background:#2dbb63;border-radius:8px;"></div>
<div style="position:absolute;left:35px;top:568.99px;width:1266px;height:151px;background:#060910;border:2px solid #131824;box-sizing:border-box;border-radius:12px;"></div>
<div style="position:absolute;left:68.5px;top:628.99px;width:31px;height:31px;background:#171a26;border-radius:16px;"></div>
<svg style="position:absolute;left:68.50px;top:629.49px" width="31" height="31" viewBox="0 0 24 24" fill="none" stroke="#7e78ad" stroke-width="1.8" stroke-linecap="round" stroke-linejoin="round"><path d="M4 14a1 1 0 0 1-.78-1.63l9.9-10.2a.5.5 0 0 1 .86.46l-1.92 6.02A1 1 0 0 0 13 10h7a1 1 0 0 1 .78 1.63l-9.9 10.2a.5.5 0 0 1-.86-.46l1.92-6.02A1 1 0 0 0 11 14z"/></svg>
<div style="position:absolute;left:120px;top:602.99px;width:150px;height:44px;background:transparent;border:2px solid #343a47;box-sizing:border-box;border-radius:10px;"></div>
<div style="position:absolute;left:131.88px;top:610.58px;font-family:'Liberation Sans',sans-serif;font-weight:400;font-size:26.52px;line-height:26.52px;letter-spacing:-0.844px;color:#e4e4e7;white-space:nowrap;-webkit-text-stroke:0.3px currentColor;">DAI Faucet</div>
<div style="position:absolute;left:123.41px;top:659.04px;font-family:'Liberation Mono',sans-serif;font-weight:400;font-size:26.47px;line-height:26.47px;letter-spacing:-1.523px;color:#94a3b8;white-space:nowrap;-webkit-text-stroke:0.35px currentColor;">0xac35...160711</div>
<div style="position:absolute;left:533.03px;top:616.16px;font-family:'Liberation Sans',sans-serif;font-weight:400;font-size:24.65px;line-height:24.65px;letter-spacing:0.193px;color:#94a3b8;white-space:nowrap;-webkit-text-stroke:0.3px currentColor;">Faucet</div>
<div style="position:absolute;left:533.38px;top:648.29px;font-family:'Liberation Mono',sans-serif;font-weight:400;font-size:27.06px;line-height:27.06px;letter-spacing:-1.859px;color:#94a3b8;white-space:nowrap;-webkit-text-stroke:0.35px currentColor;">0xe29f...766e85</div>
<svg style="position:absolute;left:774px;top:637.99px" width="28" height="16" viewBox="0 0 28 16" fill="none" stroke="#464b5a" stroke-width="1.6" stroke-linecap="round"><path d="M2 8h22M20 4l4 4-4 4"/></svg>
<div style="position:absolute;left:823.43px;top:616.16px;font-family:'Liberation Sans',sans-serif;font-weight:400;font-size:24.65px;line-height:24.65px;letter-spacing:0.224px;color:#94a3b8;white-space:nowrap;-webkit-text-stroke:0.3px currentColor;">DAI</div>
<div style="position:absolute;left:823.78px;top:648.29px;font-family:'Liberation Mono',sans-serif;font-weight:400;font-size:27.06px;line-height:27.06px;letter-spacing:-1.873px;color:#94a3b8;white-space:nowrap;-webkit-text-stroke:0.35px currentColor;">0x6b17...271d0f</div>
<div style="position:absolute;left:1235px;top:637.49px;width:15px;height:15px;background:#2dbb63;border-radius:8px;"></div>
<div style="position:absolute;left:35px;top:753.3200000000002px;width:1266px;height:151px;background:#060910;border:2px solid #131824;box-sizing:border-box;border-radius:12px;"></div>
<div style="position:absolute;left:68.5px;top:813.3200000000002px;width:31px;height:31px;background:#171a26;border-radius:16px;"></div>
<svg style="position:absolute;left:68.50px;top:813.82px" width="31" height="31" viewBox="0 0 24 24" fill="none" stroke="#7e78ad" stroke-width="1.8" stroke-linecap="round" stroke-linejoin="round"><path d="M4 14a1 1 0 0 1-.78-1.63l9.9-10.2a.5.5 0 0 1 .86.46l-1.92 6.02A1 1 0 0 0 13 10h7a1 1 0 0 1 .78 1.63l-9.9 10.2a.5.5 0 0 1-.86-.46l1.92-6.02A1 1 0 0 0 11 14z"/></svg>
<div style="position:absolute;left:120px;top:787.3200000000002px;width:176px;height:44px;background:transparent;border:2px solid #343a47;box-sizing:border-box;border-radius:10px;"></div>
<div style="position:absolute;left:131.84px;top:794.91px;font-family:'Liberation Sans',sans-serif;font-weight:400;font-size:26.52px;line-height:26.52px;letter-spacing:-0.995px;color:#e4e4e7;white-space:nowrap;-webkit-text-stroke:0.3px currentColor;">USDT Faucet</div>
<div style="position:absolute;left:123.41px;top:843.37px;font-family:'Liberation Mono',sans-serif;font-weight:400;font-size:26.47px;line-height:26.47px;letter-spacing:-1.542px;color:#94a3b8;white-space:nowrap;-webkit-text-stroke:0.35px currentColor;">0x91c4...5e02aa</div>
<div style="position:absolute;left:533.03px;top:800.49px;font-family:'Liberation Sans',sans-serif;font-weight:400;font-size:24.65px;line-height:24.65px;letter-spacing:0.193px;color:#94a3b8;white-space:nowrap;-webkit-text-stroke:0.3px currentColor;">Faucet</div>
<div style="position:absolute;left:533.38px;top:832.62px;font-family:'Liberation Mono',sans-serif;font-weight:400;font-size:27.06px;line-height:27.06px;letter-spacing:-1.859px;color:#94a3b8;white-space:nowrap;-webkit-text-stroke:0.35px currentColor;">0xe29f...766e85</div>
<svg style="position:absolute;left:774px;top:822.3200000000002px" width="28" height="16" viewBox="0 0 28 16" fill="none" stroke="#464b5a" stroke-width="1.6" stroke-linecap="round"><path d="M2 8h22M20 4l4 4-4 4"/></svg>
<div style="position:absolute;left:823.67px;top:800.49px;font-family:'Liberation Sans',sans-serif;font-weight:400;font-size:24.65px;line-height:24.65px;letter-spacing:-0.219px;color:#94a3b8;white-space:nowrap;-webkit-text-stroke:0.3px currentColor;">USDT</div>
<div style="position:absolute;left:823.78px;top:832.62px;font-family:'Liberation Mono',sans-serif;font-weight:400;font-size:27.06px;line-height:27.06px;letter-spacing:-1.853px;color:#94a3b8;white-space:nowrap;-webkit-text-stroke:0.35px currentColor;">0xdac1...831ec7</div>
<div style="position:absolute;left:1235px;top:821.8200000000002px;width:15px;height:15px;background:#22c55e;border-radius:8px;"></div>
</div>
<div style="position:absolute;left:1525px;top:1056px;width:12px;height:583px;background:#161a23;border-radius:6px;"></div>
<div style="position:absolute;left:1563px;top:370px;width:1861px;height:1507px;background:#070a11;border:2px solid #131824;box-sizing:border-box;border-radius:12px;"></div>
<div style="position:absolute;left:1596.05px;top:427.88px;font-family:'Liberation Sans',sans-serif;font-weight:400;font-size:29.01px;line-height:29.01px;letter-spacing:2.152px;color:#fafafa;white-space:nowrap;-webkit-text-stroke:0.3px currentColor;">CONTRACT PANEL</div>
<div style="position:absolute;left:2628px;top:404px;width:263.5px;height:76px;background:#0c1018;border:2px solid #1c2130;box-sizing:border-box;border-radius:12px;"></div>
<svg style="position:absolute;left:2645.50px;top:425.50px" width="32" height="32" viewBox="0 0 24 24" fill="none" stroke="#fafafa" stroke-width="2" stroke-linecap="round" stroke-linejoin="round"><path d="M3 3v16a2 2 0 0 0 2 2h16"/><path d="M18 17V9"/><path d="M13 17V5"/><path d="M8 17v-3"/></svg>
<div style="position:absolute;left:2694.14px;top:427.70px;font-family:'Liberation Sans',sans-serif;font-weight:400;font-size:28.17px;line-height:28.17px;letter-spacing:0.929px;color:#fafafa;white-space:nowrap;-webkit-text-stroke:0.3px currentColor;">Tracked Data</div>
<div style="position:absolute;left:2908.4px;top:404px;width:186.0999999999999px;height:76px;background:#0c1018;border:2px solid #1c2130;box-sizing:border-box;border-radius:12px;"></div>
<svg style="position:absolute;left:2925.90px;top:425.50px" width="32" height="32" viewBox="0 0 24 24" fill="none" stroke="#fafafa" stroke-width="2" stroke-linecap="round" stroke-linejoin="round"><polyline points="4 17 10 11 4 5"/><line x1="12" x2="20" y1="19" y2="19"/></svg>
<div style="position:absolute;left:2971.96px;top:427.70px;font-family:'Liberation Sans',sans-serif;font-weight:400;font-size:28.17px;line-height:28.17px;letter-spacing:1.433px;color:#fafafa;white-space:nowrap;-webkit-text-stroke:0.3px currentColor;">Interact</div>
<div style="position:absolute;left:3111.8px;top:404px;width:277.5px;height:76px;background:#0c1018;border:2px solid #1c2130;box-sizing:border-box;border-radius:12px;"></div>
<svg style="position:absolute;left:3129.30px;top:425.50px" width="32" height="32" viewBox="0 0 24 24" fill="none" stroke="#fafafa" stroke-width="2" stroke-linecap="round" stroke-linejoin="round"><ellipse cx="12" cy="5" rx="9" ry="3"/><path d="M3 5V19A9 3 0 0 0 21 19V5"/><path d="M3 12A9 3 0 0 0 21 12"/></svg>
<div style="position:absolute;left:3175.59px;top:427.70px;font-family:'Liberation Sans',sans-serif;font-weight:400;font-size:28.17px;line-height:28.17px;letter-spacing:1.182px;color:#fafafa;white-space:nowrap;-webkit-text-stroke:0.3px currentColor;">Contract State</div>
<div style="position:absolute;left:1597px;top:513px;width:1792px;height:1330px;background:#060910;border:2px solid #131824;box-sizing:border-box;border-radius:12px;"></div>
<div style="position:absolute;left:1632.00px;top:554.68px;font-family:'Liberation Sans',sans-serif;font-weight:400;font-size:39.44px;line-height:39.44px;letter-spacing:0.072px;color:#fafafa;white-space:nowrap;-webkit-text-stroke:0.3px currentColor;">Activity</div>
<div style="position:absolute;left:1630.20px;top:616.15px;font-family:'Liberation Sans',sans-serif;font-weight:400;font-size:35.92px;line-height:35.92px;letter-spacing:-1.056px;color:#e4e4e7;white-space:nowrap;-webkit-text-stroke:0.3px currentColor;">6 transactions</div>
<div style="position:absolute;left:2929px;top:547px;width:426px;height:70px;background:transparent;border:2px solid #131722;box-sizing:border-box;border-radius:14px;"></div>
<div style="position:absolute;left:2938px;top:557px;width:110px;height:51px;background:#dfdee3;border-radius:10px;"></div>
<div style="position:absolute;left:2954.89px;top:569.41px;font-family:'Liberation Sans',sans-serif;font-weight:400;font-size:24.37px;line-height:24.37px;letter-spacing:0.775px;color:#09090b;white-space:nowrap;-webkit-text-stroke:0.3px currentColor;">10MIN</div>
<div style="position:absolute;left:3056px;top:557px;width:63.40000000000009px;height:51px;background:#0c1018;border:2px solid #1c2130;box-sizing:border-box;border-radius:10px;"></div>
<div style="position:absolute;left:3071.89px;top:569.41px;font-family:'Liberation Sans',sans-serif;font-weight:400;font-size:24.37px;line-height:24.37px;letter-spacing:-1.284px;color:#fafafa;white-space:nowrap;-webkit-text-stroke:0.3px currentColor;">1H</div>
<div style="position:absolute;left:3128px;top:557px;width:63.5px;height:51px;background:#0c1018;border:2px solid #1c2130;box-sizing:border-box;border-radius:10px;"></div>
<div style="position:absolute;left:3144.99px;top:569.41px;font-family:'Liberation Sans',sans-serif;font-weight:400;font-size:24.37px;line-height:24.37px;letter-spacing:-2.815px;color:#fafafa;white-space:nowrap;-webkit-text-stroke:0.3px currentColor;">1D</div>
<div style="position:absolute;left:3200.5px;top:557px;width:69.19999999999982px;height:51px;background:#0c1018;border:2px solid #1c2130;box-sizing:border-box;border-radius:10px;"></div>
<div style="position:absolute;left:3216.29px;top:569.41px;font-family:'Liberation Sans',sans-serif;font-weight:400;font-size:24.37px;line-height:24.37px;letter-spacing:-2.594px;color:#fafafa;white-space:nowrap;-webkit-text-stroke:0.3px currentColor;">1W</div>
<div style="position:absolute;left:3278.6px;top:557px;width:66.80000000000018px;height:51px;background:#0c1018;border:2px solid #1c2130;box-sizing:border-box;border-radius:10px;"></div>
<div style="position:absolute;left:3294.29px;top:569.41px;font-family:'Liberation Sans',sans-serif;font-weight:400;font-size:24.37px;line-height:24.37px;letter-spacing:-0.364px;color:#fafafa;white-space:nowrap;-webkit-text-stroke:0.3px currentColor;">1M</div>
<svg style="position:absolute;left:1711px;top:762.5px" width="1605" height="967.2"><rect x="40" y="0" width="1" height="967.2" fill="#121621"/><rect x="80" y="0" width="1" height="967.2" fill="#121621"/><rect x="120" y="0" width="1" height="967.2" fill="#121621"/><rect x="160" y="0" width="1" height="967.2" fill="#121621"/><rect x="200" y="0" width="1" height="967.2" fill="#121621"/><rect x="240" y="0" width="1" height="967.2" fill="#121621"/><rect x="280" y="0" width="1" height="967.2" fill="#121621"/><rect x="320" y="0" width="1" height="967.2" fill="#121621"/><rect x="360" y="0" width="1" height="967.2" fill="#121621"/><rect x="400" y="0" width="1" height="967.2" fill="#121621"/><rect x="440" y="0" width="1" height="967.2" fill="#121621"/><rect x="480" y="0" width="1" height="967.2" fill="#121621"/><rect x="520" y="0" width="1" height="967.2" fill="#121621"/><rect x="560" y="0" width="1" height="967.2" fill="#121621"/><rect x="600" y="0" width="1" height="967.2" fill="#121621"/><rect x="640" y="0" width="1" height="967.2" fill="#121621"/><rect x="680" y="0" width="1" height="967.2" fill="#121621"/><rect x="720" y="0" width="1" height="967.2" fill="#121621"/><rect x="760" y="0" width="1" height="967.2" fill="#121621"/><rect x="800" y="0" width="1" height="967.2" fill="#121621"/><rect x="840" y="0" width="1" height="967.2" fill="#121621"/><rect x="880" y="0" width="1" height="967.2" fill="#121621"/><rect x="920" y="0" width="1" height="967.2" fill="#121621"/><rect x="960" y="0" width="1" height="967.2" fill="#121621"/><rect x="1000" y="0" width="1" height="967.2" fill="#121621"/><rect x="1040" y="0" width="1" height="967.2" fill="#121621"/><rect x="1080" y="0" width="1" height="967.2" fill="#121621"/><rect x="1120" y="0" width="1" height="967.2" fill="#121621"/><rect x="1160" y="0" width="1" height="967.2" fill="#121621"/><rect x="1200" y="0" width="1" height="967.2" fill="#121621"/><rect x="1240" y="0" width="1" height="967.2" fill="#121621"/><rect x="1280" y="0" width="1" height="967.2" fill="#121621"/><rect x="1320" y="0" width="1" height="967.2" fill="#121621"/><rect x="1360" y="0" width="1" height="967.2" fill="#121621"/><rect x="1400" y="0" width="1" height="967.2" fill="#121621"/><rect x="1440" y="0" width="1" height="967.2" fill="#121621"/><rect x="1480" y="0" width="1" height="967.2" fill="#121621"/><rect x="1520" y="0" width="1" height="967.2" fill="#121621"/><rect x="1560" y="0" width="1" height="967.2" fill="#121621"/><rect x="1600" y="0" width="1" height="967.2" fill="#121621"/><rect x="0" y="-0.5" width="1605" height="1" fill="#121621"/><rect x="0" y="39.5" width="1605" height="1" fill="#121621"/><rect x="0" y="79.5" width="1605" height="1" fill="#121621"/><rect x="0" y="119.5" width="1605" height="1" fill="#121621"/><rect x="0" y="159.5" width="1605" height="1" fill="#121621"/><rect x="0" y="199.5" width="1605" height="1" fill="#121621"/><rect x="0" y="239.5" width="1605" height="1" fill="#121621"/><rect x="0" y="279.5" width="1605" height="1" fill="#121621"/><rect x="0" y="319.5" width="1605" height="1" fill="#121621"/><rect x="0" y="359.5" width="1605" height="1" fill="#121621"/><rect x="0" y="399.5" width="1605" height="1" fill="#121621"/><rect x="0" y="439.5" width="1605" height="1" fill="#121621"/><rect x="0" y="479.5" width="1605" height="1" fill="#121621"/><rect x="0" y="519.5" width="1605" height="1" fill="#121621"/><rect x="0" y="559.5" width="1605" height="1" fill="#121621"/><rect x="0" y="599.5" width="1605" height="1" fill="#121621"/><rect x="0" y="639.5" width="1605" height="1" fill="#121621"/><rect x="0" y="679.5" width="1605" height="1" fill="#121621"/><rect x="0" y="719.5" width="1605" height="1" fill="#121621"/><rect x="0" y="759.5" width="1605" height="1" fill="#121621"/><rect x="0" y="799.5" width="1605" height="1" fill="#121621"/><rect x="0" y="839.5" width="1605" height="1" fill="#121621"/><rect x="0" y="879.5" width="1605" height="1" fill="#121621"/><rect x="0" y="919.5" width="1605" height="1" fill="#121621"/><rect x="0" y="959.5" width="1605" height="1" fill="#121621"/></svg>
<div style="position:absolute;left:1710px;top:762.5px;width:2px;height:968px;background:#221f44;border-radius:0px;"></div>
<div style="position:absolute;left:1882.7px;top:899.3px;width:115.70000000000005px;height:830.4000000000001px;background:linear-gradient(180deg,#483f8c 0%,#433a82 45%,#2f2860 80%,#262049 100%);border-radius:7px;box-shadow:inset 0 0 0 1px rgba(100,84,205,0.3)"></div>
<div style="position:absolute;left:2742.7px;top:1454.2px;width:115.5px;height:275.5px;background:linear-gradient(180deg,#483f8c 0%,#433a82 45%,#2f2860 80%,#262049 100%);border-radius:7px;box-shadow:inset 0 0 0 1px rgba(100,84,205,0.3)"></div>
<div style="position:absolute;left:2886px;top:1175.5px;width:115px;height:554.2px;background:linear-gradient(180deg,#483f8c 0%,#433a82 45%,#2f2860 80%,#262049 100%);border-radius:7px;box-shadow:inset 0 0 0 1px rgba(100,84,205,0.3)"></div>
<div style="position:absolute;left:1711px;top:1729px;width:1605px;height:2px;background:#27254a;border-radius:0px;"></div>
<div style="position:absolute;left:1680.53px;top:1162.58px;font-family:'Liberation Sans',sans-serif;font-weight:400;font-size:25.35px;line-height:25.35px;letter-spacing:0.000px;color:#94a3b8;white-space:nowrap;-webkit-text-stroke:0.3px currentColor;">2</div>
<div style="position:absolute;left:1679.88px;top:1717.77px;font-family:'Liberation Sans',sans-serif;font-weight:400;font-size:23.94px;line-height:23.94px;letter-spacing:0.000px;color:#94a3b8;white-space:nowrap;-webkit-text-stroke:0.3px currentColor;">0</div>
<div style="position:absolute;left:1766.79px;top:1740.50px;font-family:'Liberation Sans',sans-serif;font-weight:400;font-size:25.92px;line-height:25.92px;letter-spacing:-1.525px;color:#94a3b8;white-space:nowrap;-webkit-text-stroke:0.3px currentColor;-webkit-text-stroke:0.5px #94a3b8">19:18</div>
<div style="position:absolute;left:2050.69px;top:1740.50px;font-family:'Liberation Sans',sans-serif;font-weight:400;font-size:25.92px;line-height:25.92px;letter-spacing:-0.175px;color:#94a3b8;white-space:nowrap;-webkit-text-stroke:0.3px currentColor;-webkit-text-stroke:0.5px #94a3b8">19:20</div>
<div style="position:absolute;left:2337.29px;top:1740.50px;font-family:'Liberation Sans',sans-serif;font-weight:400;font-size:25.92px;line-height:25.92px;letter-spacing:-0.110px;color:#94a3b8;white-space:nowrap;-webkit-text-stroke:0.3px currentColor;-webkit-text-stroke:0.5px #94a3b8">19:22</div>
<div style="position:absolute;left:2623.89px;top:1740.50px;font-family:'Liberation Sans',sans-serif;font-weight:400;font-size:25.92px;line-height:25.92px;letter-spacing:-0.240px;color:#94a3b8;white-space:nowrap;-webkit-text-stroke:0.3px currentColor;-webkit-text-stroke:0.5px #94a3b8">19:24</div>
<div style="position:absolute;left:2910.49px;top:1740.50px;font-family:'Liberation Sans',sans-serif;font-weight:400;font-size:25.92px;line-height:25.92px;letter-spacing:-0.175px;color:#94a3b8;white-space:nowrap;-webkit-text-stroke:0.3px currentColor;-webkit-text-stroke:0.5px #94a3b8">19:26</div>
<div style="position:absolute;left:3197.09px;top:1740.50px;font-family:'Liberation Sans',sans-serif;font-weight:400;font-size:25.92px;line-height:25.92px;letter-spacing:-0.175px;color:#94a3b8;white-space:nowrap;-webkit-text-stroke:0.3px currentColor;-webkit-text-stroke:0.5px #94a3b8">19:28</div>
</body></html>
